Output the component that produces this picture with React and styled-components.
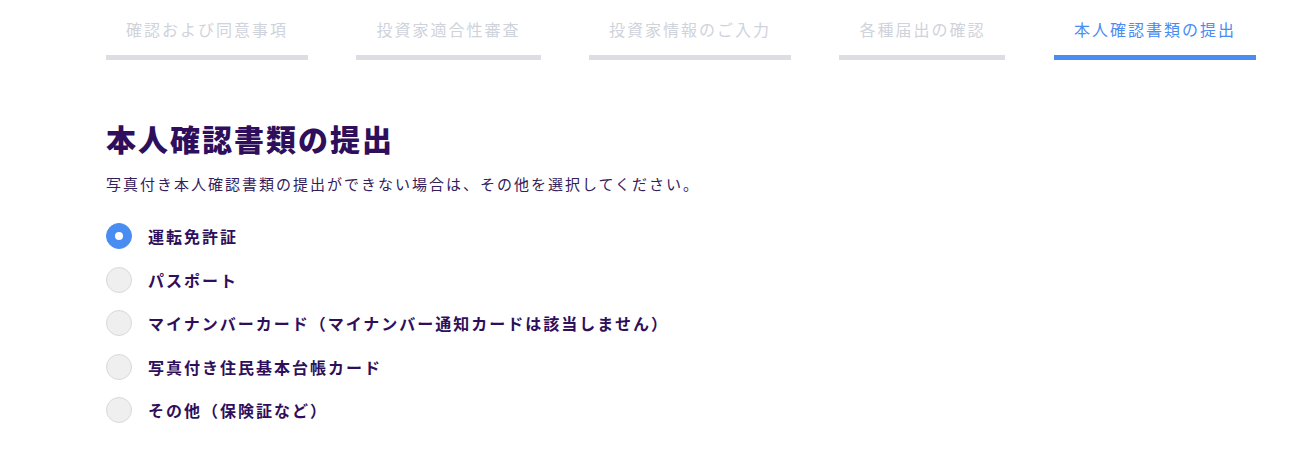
import React, { useState } from "react";
import styled, { createGlobalStyle } from "styled-components";

const Global = createGlobalStyle`
  html, body { margin: 0; padding: 0; background: #ffffff; }
  body { font-family: "Noto Sans CJK JP", "Noto Sans", sans-serif; }
`;

const Page = styled.div`
  padding-left: 106px;
  width: 1150px;
`;

const Steps = styled.nav`
  display: flex;
  justify-content: space-between;
`;

const Step = styled.div`
  padding: 17px 20px 14px;
  font-size: 16px;
  line-height: 24px;
  letter-spacing: 2px;
  white-space: nowrap;
  color: ${(p) => (p.$active ? "#4a8df2" : "#cfd3dc")};
  border-bottom: 5px solid ${(p) => (p.$active ? "#4a8df2" : "#dcdee3")};
`;

const Title = styled.h1`
  margin: 58px 0 0;
  font-size: 30px;
  line-height: 40px;
  font-weight: 900;
  letter-spacing: 2px;
  color: #2f0f5c;
`;

const Lead = styled.p`
  margin: 14px 0 0;
  font-size: 15px;
  line-height: 24px;
  letter-spacing: 2px;
  color: #34205a;
`;

const Options = styled.div`
  margin-top: 27px;
  display: flex;
  flex-direction: column;
  gap: 17.5px;
`;

const Option = styled.label`
  display: flex;
  align-items: center;
  gap: 16px;
  height: 26px;
  cursor: pointer;
`;

const Circle = styled.span`
  box-sizing: border-box;
  width: 26px;
  height: 26px;
  border-radius: 50%;
  flex: none;
  display: flex;
  align-items: center;
  justify-content: center;
  background: ${(p) => (p.$checked ? "#4a8df2" : "#efefef")};
  border: 1px solid ${(p) => (p.$checked ? "#4a8df2" : "#d9d9dc")};
  &::after {
    content: "";
    width: 8px;
    height: 8px;
    border-radius: 50%;
    background: #ffffff;
    display: ${(p) => (p.$checked ? "block" : "none")};
  }
`;

const OptionText = styled.span`
  font-size: 16px;
  line-height: 24px;
  font-weight: 700;
  letter-spacing: 2px;
  color: #2f0f5c;
  white-space: nowrap;
`;

const steps = [
  "確認および同意事項",
  "投資家適合性審査",
  "投資家情報のご入力",
  "各種届出の確認",
  "本人確認書類の提出",
];

const options = [
  "運転免許証",
  "パスポート",
  "マイナンバーカード（マイナンバー通知カードは該当しません）",
  "写真付き住民基本台帳カード",
  "その他（保険証など）",
];

export default function App() {
  const [selected, setSelected] = useState(0);
  return (
    <>
      <Global />
      <Page>
        <Steps>
          {steps.map((s, i) => (
            <Step key={s} $active={i === steps.length - 1}>
              {s}
            </Step>
          ))}
        </Steps>
        <Title>本人確認書類の提出</Title>
        <Lead>写真付き本人確認書類の提出ができない場合は、その他を選択してください。</Lead>
        <Options>
          {options.map((o, i) => (
            <Option key={o} onClick={() => setSelected(i)}>
              <Circle $checked={selected === i} />
              <OptionText>{o}</OptionText>
            </Option>
          ))}
        </Options>
      </Page>
    </>
  );
}
